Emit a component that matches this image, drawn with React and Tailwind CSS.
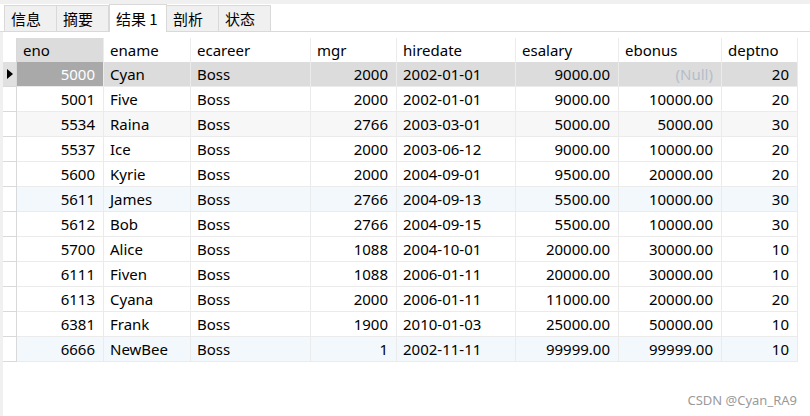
import React from "react";

const COLS = [
  { key: "eno", w: 87, right: true },
  { key: "ename", w: 87 },
  { key: "ecareer", w: 120 },
  { key: "mgr", w: 86, right: true },
  { key: "hiredate", w: 119 },
  { key: "esalary", w: 103, right: true },
  { key: "ebonus", w: 103, right: true },
  { key: "deptno", w: 76, right: true },
];

const ROWS = [
  ["5000", "Cyan", "Boss", "2000", "2002-01-01", "9000.00", null, "20"],
  ["5001", "Five", "Boss", "2000", "2002-01-01", "9000.00", "10000.00", "20"],
  ["5534", "Raina", "Boss", "2766", "2003-03-01", "5000.00", "5000.00", "30"],
  ["5537", "Ice", "Boss", "2000", "2003-06-12", "9000.00", "10000.00", "20"],
  ["5600", "Kyrie", "Boss", "2000", "2004-09-01", "9500.00", "20000.00", "20"],
  ["5611", "James", "Boss", "2766", "2004-09-13", "5500.00", "10000.00", "30"],
  ["5612", "Bob", "Boss", "2766", "2004-09-15", "5500.00", "10000.00", "30"],
  ["5700", "Alice", "Boss", "1088", "2004-10-01", "20000.00", "30000.00", "10"],
  ["6111", "Fiven", "Boss", "1088", "2006-01-11", "20000.00", "30000.00", "10"],
  ["6113", "Cyana", "Boss", "2000", "2006-01-11", "11000.00", "20000.00", "20"],
  ["6381", "Frank", "Boss", "1900", "2010-01-03", "25000.00", "50000.00", "10"],
  ["6666", "NewBee", "Boss", "1", "2002-11-11", "99999.00", "99999.00", "10"],
];

const rowBg = (i) => {
  if (i === 0) return "bg-[#dcdcdc]";
  if (i === 2) return "bg-[#f7f7f7]";
  if (i === 5 || i === 11) return "bg-[#f3f8fd]";
  return "bg-white";
};

const TABS = ["信息", "摘要", "结果 1", "剖析", "状态"];

export default function App() {
  return (
    <div
      className="w-[810px] h-[416px] bg-white overflow-hidden text-[15px] text-black flex flex-col"
      style={{ fontFamily: '"Noto Sans", "Noto Sans CJK SC", sans-serif' }}
    >
      {/* tab strip */}
      <div className="h-[4px] bg-[#f0f0f0] shrink-0" />
      <div className="h-[28px] flex items-end pl-[4px] border-b border-[#d9d9d9] shrink-0">
        {TABS.map((t, i) =>
          i === 2 ? (
            <div
              key={t}
              className="w-[58px] h-[28px] -mb-px bg-white border border-b-0 border-[#d9d9d9] flex items-center pl-[6px] leading-none"
              style={{ fontFamily: '"Noto Sans CJK SC", sans-serif' }}
            >
              {t}
            </div>
          ) : (
            <div
              key={t}
              className="w-[53px] h-[26px] bg-[#f0f0f0] border-l border-t border-r border-[#d9d9d9] -ml-px first:ml-0 flex items-center pl-[6px] leading-none"
              style={{ fontFamily: '"Noto Sans CJK SC", sans-serif' }}
            >
              {t}
            </div>
          )
        )}
      </div>

      <div className="flex flex-1">
        <div className="w-[3px] bg-[#f0f0f0]" />
        <div className="flex-1 pt-[6px]">
          {/* header */}
          <div className="flex h-[24px]">
            <div className="w-[14px] border-r border-[#d9d9d9]" />
            {COLS.map((c, ci) => (
              <div
                key={c.key}
                className={`h-[24px] flex items-center pl-[6px] border-r border-[#ececec] ${ci === 0 ? "bg-[#dcdcdc]" : "bg-white"}`}
                style={{ width: c.w }}
              >
                {c.key}
              </div>
            ))}
          </div>
          {/* rows */}
          {ROWS.map((r, ri) => (
            <div key={ri} className="flex h-[25px]">
              <div
                className={`w-[14px] border-r border-b border-[#d9d9d9] flex items-center justify-center ${ri === 0 ? "bg-[#e0e0e0]" : "bg-white"}`}
              >
                {ri === 0 && (
                  <svg width="6" height="10" viewBox="0 0 6 10">
                    <path d="M0 0 L6 5 L0 10 Z" fill="#000" />
                  </svg>
                )}
              </div>
              {COLS.map((c, ci) => {
                const v = r[ci];
                const sel = ri === 0 && ci === 0;
                return (
                  <div
                    key={c.key}
                    className={`h-[25px] flex items-center pt-[1px] border-r border-b border-[#ebebeb] ${
                      c.right ? "justify-end pr-[8px]" : "pl-[6px]"
                    } ${sel ? "bg-[#a9a9a9] text-white" : rowBg(ri)}`}
                    style={{ width: c.w }}
                  >
                    {v === null ? <span className="text-[#b4bccb]">(Null)</span> : v}
                  </div>
                );
              })}
            </div>
          ))}
          <div className="flex justify-end pr-[13px] pt-[29px]">
            <span className="text-[13px] text-[#9a9a9a]">CSDN @Cyan_RA9</span>
          </div>
        </div>
      </div>
    </div>
  );
}
